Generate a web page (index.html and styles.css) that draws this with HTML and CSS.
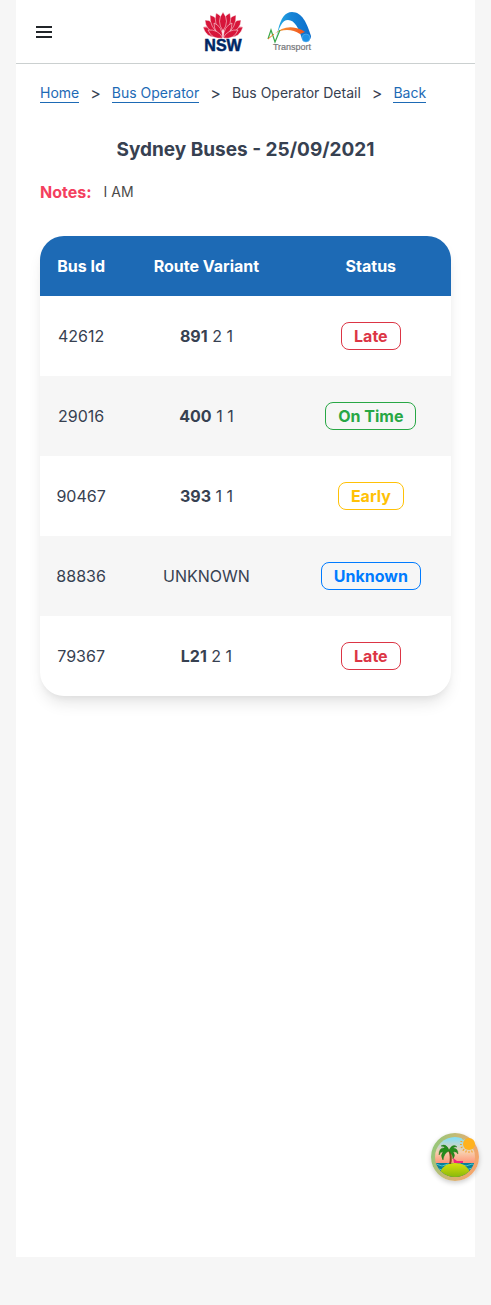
FILE: index.html
```html
<!DOCTYPE html>
<html lang="en">
<head>
<meta charset="utf-8">
<meta name="viewport" content="width=device-width, initial-scale=1">
<title>Bus Operator Detail</title>
<link rel="stylesheet" href="styles.css">
</head>
<body>
<div class="page">
  <header class="header">
    <button class="menu" type="button" aria-label="Menu">
      <svg width="16" height="12" viewBox="0 0 16 12" aria-hidden="true"><path d="M0 1h16M0 6h16M0 11h16" stroke="#212529" stroke-width="2"/></svg>
    </button>
    <div class="logos">
      <svg class="logo" width="40" height="48" viewBox="0 -4 40 48" role="img" aria-label="NSW">
        <g fill="#d7153a" stroke="#fff" stroke-width=".5">
          <path d="M0 15Q7 14 12 19L17 25Q3 27 0 15Z"/>
          <path d="M40 15Q33 14 28 19L23 25Q37 27 40 15Z"/>
          <path d="M2 8Q10 8 14 17L16 24Q2 18 2 8Z"/>
          <path d="M38 8Q30 8 26 17L24 24Q38 18 38 8Z"/>
          <path d="M7 3Q15 5 16 13L18 24Q6 15 7 3Z"/>
          <path d="M33 3Q25 5 24 13L22 24Q34 15 33 3Z"/>
          <path d="M13 1Q20 4 20 12L19 22Q10 12 13 1Z"/>
          <path d="M27 1Q20 4 20 12L21 22Q30 12 27 1Z"/>
          <path d="M20 0Q27 9 20 19Q13 9 20 0Z"/>
          <path d="M11 11Q19 14 20 26Q11 21 11 11Z"/>
          <path d="M29 11Q21 14 20 26Q29 21 29 11Z"/>
          <path d="M5 18Q15 17 20 26Q9 28 5 18Z"/>
          <path d="M35 18Q25 17 20 26Q31 28 35 18Z"/>
        </g>
        <text class="nsw-text" x="20" y="39" text-anchor="middle">NSW</text>
      </svg>
      <svg class="logo" width="46" height="48" viewBox="0 -4 46 48" role="img" aria-label="Transport">
        <defs>
          <linearGradient id="arc" x1="0" x2="1"><stop offset="0" stop-color="#2bb3e6"/><stop offset=".45" stop-color="#1684d6"/><stop offset="1" stop-color="#0d6dcb"/></linearGradient>
          <linearGradient id="road" x1="0" x2="1"><stop offset="0" stop-color="#f9a13a"/><stop offset="1" stop-color="#f0521d"/></linearGradient>
        </defs>
        <path d="M8 30L11 18C14 6 18 0 25 0C35 0 40 11 44 24A5 5 0 0 1 35 27C32 17 28 8 21 8C15 8 12 15 8 30Z" fill="url(#arc)"/>
        <path d="M7 22C15 15 24 13 35 18L38 20L33 22Q27 18 20 18Q13 18 7 22Z" fill="url(#road)"/>
        <path d="M1 27L4 18L8 30L13 18" fill="none" stroke="#39a94a" stroke-width="1.2"/>
        <path d="M1 27L7 22" stroke="#f17b24"/>
        <circle cx="39" cy="26" r="4" fill="#1e91e5" stroke="#6bbdf2" stroke-width=".5"/>
        <text class="transport-text" x="25" y="38" text-anchor="middle">Transport</text>
      </svg>
    </div>
  </header>
  <main class="content">
    <nav class="crumbs" aria-label="Breadcrumb">
      <a href="#">Home</a><span class="sep">&gt;</span>
      <a href="#">Bus Operator</a><span class="sep">&gt;</span>
      <span>Bus Operator Detail</span><span class="sep">&gt;</span>
      <a href="#">Back</a>
    </nav>
    <h1 class="title">Sydney Buses - 25/09/2021</h1>
    <p class="notes"><strong>Notes:</strong><span>I AM</span></p>
    <div class="card">
      <table class="table">
        <thead><tr><th class="col-bus" scope="col">Bus Id</th><th class="col-route" scope="col">Route Variant</th><th scope="col">Status</th></tr></thead>
        <tbody>
          <tr><td>42612</td><td><b>891</b> 2 1</td><td><span class="badge late">Late</span></td></tr>
          <tr><td>29016</td><td><b>400</b> 1 1</td><td><span class="badge on-time">On Time</span></td></tr>
          <tr><td>90467</td><td><b>393</b> 1 1</td><td><span class="badge early">Early</span></td></tr>
          <tr><td>88836</td><td>UNKNOWN</td><td><span class="badge unknown">Unknown</span></td></tr>
          <tr><td>79367</td><td><b>L21</b> 2 1</td><td><span class="badge late">Late</span></td></tr>
        </tbody>
      </table>
    </div>
  </main>
</div>
<button class="island" type="button" aria-label="Open developer tools">
  <svg width="48" height="48" viewBox="0 0 48 48" aria-hidden="true">
    <defs>
      <linearGradient id="ring" x1="0" x2="1" y2=".3"><stop offset="0" stop-color="#86cb7a"/><stop offset=".5" stop-color="#c5ba75"/><stop offset="1" stop-color="#f3a66c"/></linearGradient>
      <linearGradient id="sky" x2="0" y2="1"><stop offset=".1" stop-color="#83def5"/><stop offset=".4" stop-color="#f8cfae"/><stop offset=".65" stop-color="#ff8f72"/></linearGradient>
      <linearGradient id="sand" x2="0" y2="1"><stop offset="0" stop-color="#dce00a"/><stop offset="1" stop-color="#83b60c"/></linearGradient>
      <clipPath id="scene"><circle cx="24" cy="24" r="20"/></clipPath>
    </defs>
    <circle cx="24" cy="24" r="24" fill="url(#ring)"/>
    <g clip-path="url(#scene)">
      <path fill="url(#sky)" d="M0 0h48v48H0z"/>
      <path fill="#087f98" d="M0 30h48v18H0z"/>
      <path d="M2 32q3-2 6 0t6 0 6 0 6 0 6 0 6 0 6 0M2 36q3-2 6 0t6 0 6 0 6 0 6 0 6 0 6 0" fill="none" stroke="#4bc5cd"/>
      <path d="M9 39Q13 30 24 30Q35 30 39 39L34 45H14Z" fill="url(#sand)"/>
      <path d="M18 31Q20 24 17 17L19 17Q22 24 20 31Z" fill="#884619"/>
      <path d="M18 17Q15 10 10 13Q13 13 14 15Q8 14 8 22Q10 18 12 19Q9 22 12 27Q13 20 18 18Q22 22 22 26Q25 22 22 19Q25 18 27 21Q27 15 22 15Q24 13 26 14Q22 10 18 17Z" fill="#258c1b" stroke="#146a15" stroke-width=".4"/>
      <path d="M22 25l4 3h6v2h-9z" fill="#ef267c"/>
    </g>
    <circle cx="38" cy="11" r="6" fill="#ffb21e"/>
    <circle cx="38" cy="11" r="8" fill="none" stroke="#f8a01c" stroke-width="2" stroke-dasharray="1 2" clip-path="url(#scene)"/>
  </svg>
</button>
</body>
</html>
```

FILE: styles.css
```css
* { box-sizing: border-box; }
body {
  margin: 0;
  padding: 0 16px 48px;
  min-height: 100vh;
  display: flex;
  flex-direction: column;
  background: #f6f6f6;
  color: #374151;
  font-family: Inter, "Liberation Sans", sans-serif;
  font-size: 16px;
  line-height: 24px;
}
.page { flex: 1; background: #fff; }
.header {
  height: 64px;
  padding: 0 16px;
  display: grid;
  grid-template-columns: 1fr auto 1fr;
  align-items: center;
  border-bottom: 1px solid #cbd0d0;
}
.menu {
  display: flex;
  justify-self: start;
  padding: 4px;
  border: 0;
  background: none;
  cursor: pointer;
}
.logos { display: flex; gap: 24px; padding-left: 24px; }
.logo { display: block; }
.nsw-text { font: 700 16px "Liberation Sans", sans-serif; fill: #002664; stroke: #002664; stroke-width: .5px; }
.transport-text { font: 9px "Liberation Sans", sans-serif; fill: #75777b; stroke: #75777b; stroke-width: .2px; }
.content { padding: 16px 24px; }
.crumbs { display: flex; flex-wrap: wrap; align-items: center; font-size: 14px; line-height: 26px; }
.crumbs a {
  color: #1d6ab5;
  text-decoration: none;
  line-height: 18px;
  border-bottom: 1px solid #1d6ab5;
}
.sep { margin: 0 11px; font-size: 16px; }
.title {
  margin: 30px 0 16px;
  text-align: center;
  font-size: 19px;
  line-height: 28px;
  font-weight: 700;
}
.notes { display: flex; align-items: center; gap: 12px; margin: 0 0 32px; font-size: 14px; color: #4b4b4b; }
.notes strong { color: #f43f5e; font-size: 16px; }
.card {
  overflow: hidden;
  border-radius: 24px;
  background: #fff;
  box-shadow: 0 10px 15px -3px rgba(0, 0, 0, .1), 0 4px 6px -2px rgba(0, 0, 0, .05);
}
.table { width: 100%; table-layout: fixed; border-collapse: collapse; text-align: center; }
.col-bus { width: 20%; }
.col-route { width: 41%; }
th { height: 60px; padding: 0; background: #1d6ab5; color: #fff; font-weight: 700; }
td { height: 80px; padding: 0; }
tbody tr:nth-child(even) { background: #f6f6f6; }
.badge {
  display: inline-block;
  padding: 1px 12px;
  border: 1px solid currentColor;
  border-radius: 8px;
  font-weight: 700;
}
.late { color: #dc3545; }
.on-time { color: #28a745; }
.early { color: #ffc107; }
.unknown { color: #007bff; }
.island {
  position: fixed;
  right: 12px;
  bottom: 124px;
  padding: 0;
  display: flex;
  border: 0;
  border-radius: 50%;
  background: none;
  box-shadow: 0 2px 5px rgba(0, 0, 0, .2);
  cursor: pointer;
}
```
